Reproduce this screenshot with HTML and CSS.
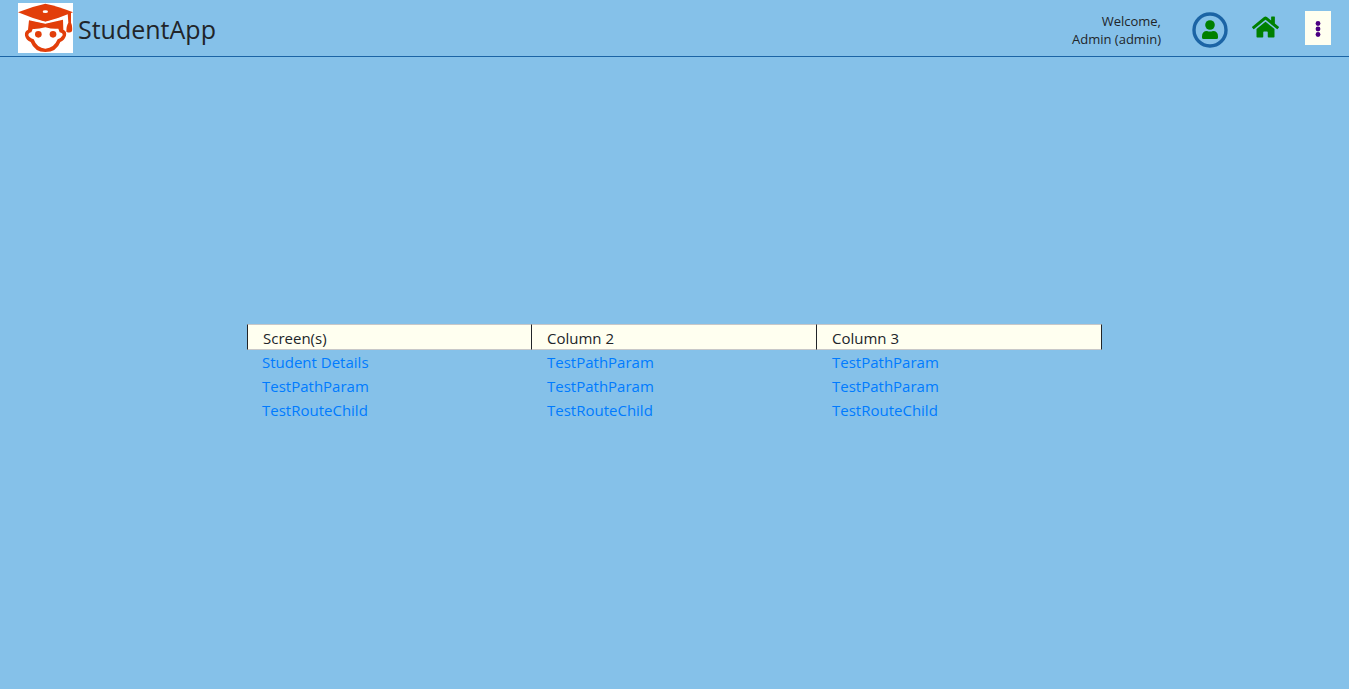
FILE: index.html
```html
<!DOCTYPE html>
<html lang="en">
<head>
<meta charset="utf-8">
<meta name="viewport" content="width=device-width, initial-scale=1">
<title>StudentApp</title>
<link rel="stylesheet" href="styles.css">
</head>
<body>
<header class="topbar">
  <a class="brand" href="#">
    <svg class="brand-logo" viewBox="0 0 165 150" aria-hidden="true">
      <path fill="#fff" d="M0 0h165v150H0z"/>
      <path fill="#e23e0a" d="M33 52L82 62L135 50L136 80Q147 84 144 98Q139 112 127 117Q116 147 82 147Q50 147 38 117Q25 112 21 98Q19 84 30 80Z"/>
      <path fill="#fff" d="M44 78Q60 79 82 73Q104 79 121 77L125 88Q135 90 134 97Q130 105 119 109Q108 136 82 137Q57 136 47 109Q34 105 31 97Q31 89 40 88Z"/>
      <path fill="#e23e0a" d="M0 28Q42 10 82 2Q122 10 165 28Q123 46 82 56Q42 46 0 28Z"/>
      <path fill="none" stroke="#fff" stroke-width="4" d="M28 45Q56 54 82 59Q110 53 146 39"/>
      <path fill="#e23e0a" d="M149 30L159 27V59Q164 68 162 85Q155 92 145 86Q145 68 151 59Z"/>
      <ellipse cx="82" cy="26" rx="8" ry="4" fill="#fff"/>
      <circle cx="61" cy="94" r="10" fill="#e23e0a"/>
      <circle cx="105" cy="94" r="10" fill="#e23e0a"/>
    </svg>
    <span class="brand-name">StudentApp</span>
  </a>
  <div class="tools">
    <p class="welcome">Welcome,<br>Admin (admin)</p>
    <button class="tool profile" type="button" aria-label="Profile">
      <svg viewBox="0 0 36 36" aria-hidden="true">
        <circle cx="18" cy="18" r="16" fill="none" stroke="#1b64a5" stroke-width="3.4"/>
        <circle cx="18" cy="13" r="4.8" fill="green"/>
        <path fill="green" d="M10 24.500q0-5.500 5-5.500q3 1.200 6 0q5 0 5 5.500v1q0 1.500-1.500 1.500h-13q-1.500 0-1.500-1.500z"/>
      </svg>
    </button>
    <a class="tool home" href="#" aria-label="Home">
      <svg viewBox="0 0 576 512" aria-hidden="true">
        <path fill="green" d="M280 148L96 300v164a16 16 0 0 0 16 16h112a16 16 0 0 0 16-16v-96a16 16 0 0 1 16-16h64a16 16 0 0 1 16 16v96a16 16 0 0 0 16 16h112a16 16 0 0 0 16-16V300L296 148a12 12 0 0 0-16 0zM572 251l-84-69V44a12 12 0 0 0-12-12h-56a12 12 0 0 0-12 12v72l-90-74a48 48 0 0 0-61 0L4 251a12 12 0 0 0-1 17l25 31a12 12 0 0 0 17 2L280 107a12 12 0 0 1 16 0l235 194a12 12 0 0 0 17-2l25-31a12 12 0 0 0-1-17z"/>
      </svg>
    </a>
    <button class="menu" type="button" aria-label="Menu">
      <svg viewBox="0 0 6 18" aria-hidden="true">
        <g fill="indigo"><circle cx="3" cy="3.500" r="2.400"/><circle cx="3" cy="9" r="2.400"/><circle cx="3" cy="14.500" r="2.400"/></g>
      </svg>
    </button>
  </div>
</header>
<main class="content">
  <table class="screens">
    <thead>
      <tr><th scope="col">Screen(s)</th><th scope="col">Column 2</th><th scope="col">Column 3</th></tr>
    </thead>
    <tbody>
      <tr><td><a href="#">Student Details</a></td><td><a href="#">TestPathParam</a></td><td><a href="#">TestPathParam</a></td></tr>
      <tr><td><a href="#">TestPathParam</a></td><td><a href="#">TestPathParam</a></td><td><a href="#">TestPathParam</a></td></tr>
      <tr><td><a href="#">TestRouteChild</a></td><td><a href="#">TestRouteChild</a></td><td><a href="#">TestRouteChild</a></td></tr>
    </tbody>
  </table>
</main>
</body>
</html>
```
FILE: styles.css
```css
* { box-sizing: border-box; }

body {
  margin: 0;
  min-height: 100vh;
  display: flex;
  flex-direction: column;
  background: #85c1e9;
  color: #212529;
  font-family: "Segoe UI", "Open Sans", "Noto Sans", sans-serif;
  font-size: 15px;
  line-height: 24px;
}

svg { display: block; width: 100%; height: 100%; }
button { border: 0; padding: 0; background: none; cursor: pointer; }

.topbar {
  display: flex;
  align-items: center;
  justify-content: space-between;
  padding: 3px 18px;
  border-bottom: 1px solid #1b64a5;
}

.brand {
  display: flex;
  align-items: center;
  gap: 5px;
  color: inherit;
  text-decoration: none;
}
.brand-logo { width: 55px; height: 50px; }
.brand-name { font-size: 25px; line-height: 36px; padding-top: 2px; }

.tools { display: flex; align-items: center; }
.welcome {
  margin: 0 31px 0 0;
  padding-top: 4px;
  font-size: 13px;
  line-height: 18px;
  text-align: right;
}
.profile { width: 36px; height: 36px; margin: 4px 24px 0 0; }
.home { width: 27px; height: 24px; margin: 0 26px 2px 0; }
.menu {
  display: flex;
  align-items: center;
  justify-content: center;
  width: 26px;
  height: 34px;
  background: #fffff0;
}
.menu svg { width: 6px; height: 18px; margin-top: 2px; }

.content {
  flex: 1;
  display: flex;
  align-items: center;
  justify-content: center;
  padding: 0 15px;
}

.screens {
  width: 100%;
  max-width: 855px;
  table-layout: fixed;
  border-collapse: separate;
  border-spacing: 0;
}
.screens th, .screens td { padding: 0 15px; text-align: left; }
.screens th {
  padding-top: 2px;
  line-height: 22px;
  font-weight: 400;
  background: #fffff0;
  border: 1px solid #c8c8c8;
  border-left: 0;
  border-right-color: #212529;
}
.screens th:first-child { border-left: 1px solid #212529; }
.screens a { color: #007bff; text-decoration: none; }
```
